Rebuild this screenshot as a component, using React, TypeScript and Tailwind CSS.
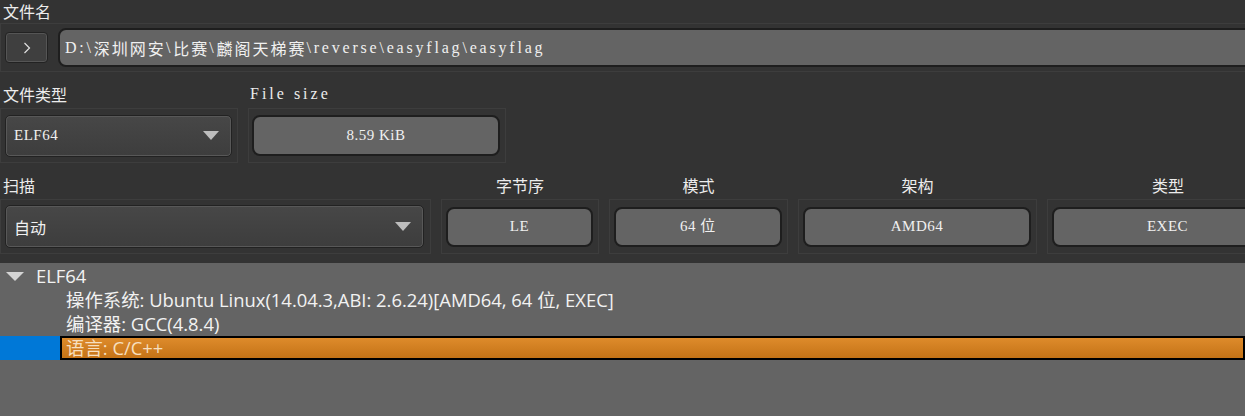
import React from "react";

const cjk = "font-['Microsoft_YaHei','Noto_Sans_CJK_SC',sans-serif]";
const serif = "font-['Liberation_Serif','Noto_Sans_CJK_SC',serif]";
const ui = "font-['Open_Sans','Noto_Sans_CJK_SC',sans-serif]";

function Frame({ className = "", children }: { className?: string; children: React.ReactNode }) {
  return (
    <div className={"border border-[#3d3d3d] flex items-center " + className}>{children}</div>
  );
}

function Combo({ text, className = "" }: { text: string; className?: string }) {
  return (
    <div
      className={
        "flex items-center justify-between rounded-[5px] border border-[#222222] bg-gradient-to-b from-[#474747] to-[#3d3d3d] shadow-[inset_0_0_0_1px_#585858] pl-[8px] pr-[12px] " +
        className
      }
    >
      <span className="text-[#f0f0f0]">{text}</span>
      <svg width="16" height="9" viewBox="0 0 16 9">
        <polygon points="0,0 16,0 8,9" fill="#bdbdbd" />
      </svg>
    </div>
  );
}

function ValueBox({ text, className = "" }: { text: string; className?: string }) {
  return (
    <div
      className={
        "flex items-center justify-center rounded-[8px] border-2 border-[#1e1e1e] bg-[#646464] text-[15px] tracking-[0.5px] text-[#f0f0f0] " +
        serif +
        " " +
        className
      }
    >
      {text}
    </div>
  );
}

function Cjk({ children }: { children: React.ReactNode }) {
  return <span className="text-[16px] tracking-[2px] font-['Noto_Sans_CJK_SC',sans-serif]">{children}</span>;
}

export default function App() {
  return (
    <div className="w-[1245px] h-[416px] overflow-hidden bg-[#333333] flex flex-col text-[#ececec]">
      {/* Row 1 */}
      <div className={"h-[23px] pl-[3px] text-[16px] leading-[23px] " + cjk}>文件名</div>
      <Frame className="h-[49px] mr-[-20px]">
        <div className="ml-[4px] w-[43px] h-[31px] rounded-[4px] border border-[#222222] bg-[#3f3f3f] shadow-[inset_0_0_0_1px_#555555] flex items-center justify-center">
          <svg width="8" height="12" viewBox="0 0 8 12">
            <polyline points="1.5,1 6.5,6 1.5,11" fill="none" stroke="#e0e0e0" strokeWidth="1.2" />
          </svg>
        </div>
        <div
          className={
            "ml-[10px] flex-1 h-[39px] rounded-[8px] border-2 border-[#1e1e1e] bg-[#646464] flex items-center pl-[5px] text-[16px] tracking-[2.8px] text-[#f0f0f0] whitespace-nowrap " +
            serif
          }
        >
          {"D:\\"}
          <Cjk>深圳网安</Cjk>
          {"\\"}
          <Cjk>比赛</Cjk>
          {"\\"}
          <Cjk>麟阁天梯赛</Cjk>
          {"\\reverse\\easyflag\\easyflag"}
        </div>
      </Frame>

      {/* Row 2 */}
      <div className="flex gap-[10px]">
        <div className="flex flex-col w-[238px]">
          <div className={"h-[36px] flex items-end pb-[3px] pl-[3px] text-[16px] leading-[22px] " + cjk}>文件类型</div>
          <Frame className="h-[55px] pl-[4px] pr-[5px]">
            <Combo text="ELF64" className={"flex-1 h-[42px] text-[15px] tracking-[0.5px] " + serif} />
          </Frame>
        </div>
        <div className="flex flex-col w-[258px]">
          <div className={"h-[36px] flex items-end pb-[4px] pl-[2px] text-[16px] tracking-[3px] leading-[20px] " + serif}>File size</div>
          <Frame className="h-[55px] pl-[3px] pr-[5px]">
            <ValueBox text="8.59 KiB" className="flex-1 h-[41px]" />
          </Frame>
        </div>
      </div>

      {/* Row 3 */}
      <div className="flex gap-[10px]">
        <div className="flex flex-col w-[431px] shrink-0">
          <div className={"h-[36px] flex items-end pb-[3px] pl-[3px] text-[16px] leading-[22px] " + cjk}>扫描</div>
          <Frame className="h-[55px] pl-[4px] pr-[6px]">
            <Combo text="自动" className={"flex-1 h-[43px] text-[16px] " + cjk} />
          </Frame>
        </div>
        {[
          { l: "字节序", v: "LE", w: "w-[158px]" },
          { l: "模式", v: "64 位", w: "w-[179px]" },
          { l: "架构", v: "AMD64", w: "w-[239px]" },
          { l: "类型", v: "EXEC", w: "w-[242px]" },
        ].map((c) => (
          <div key={c.l} className={"flex flex-col shrink-0 " + c.w}>
            <div className={"h-[36px] flex items-end justify-center pb-[3px] text-[16px] leading-[22px] " + cjk}>{c.l}</div>
            <Frame className="h-[55px] pl-[4px] pr-[5px]">
              <ValueBox text={c.v} className="flex-1 h-[40px]" />
            </Frame>
          </div>
        ))}
      </div>

      {/* Tree */}
      <div className={"mt-[9px] flex-1 bg-[#646464] pt-[1px] text-[18.4px] text-[#f2f2f2] " + ui}>
        <div className="h-[24px] flex items-center">
          <svg className="ml-[6px]" width="18" height="9" viewBox="0 0 18 9">
            <polygon points="0,0 18,0 9,9" fill="#d4d4d4" />
          </svg>
          <span className="ml-[12px]">ELF64</span>
        </div>
        <div className="h-[24px] flex items-center pl-[66px] whitespace-nowrap">
          操作系统: Ubuntu Linux(14.04.3,ABI: 2.6.24)[AMD64, 64 位, EXEC]
        </div>
        <div className="h-[24px] flex items-center pl-[66px] whitespace-nowrap">编译器: GCC(4.8.4)</div>
        <div className="h-[24px] flex">
          <div className="w-[60px] bg-[#0078d7]" />
          <div className="flex-1 border-2 border-black bg-gradient-to-b from-[#de8b2b] to-[#c47316] flex items-center pl-[4px] text-[#f6dfbf]">
            语言: C/C++
          </div>
        </div>
      </div>
    </div>
  );
}
